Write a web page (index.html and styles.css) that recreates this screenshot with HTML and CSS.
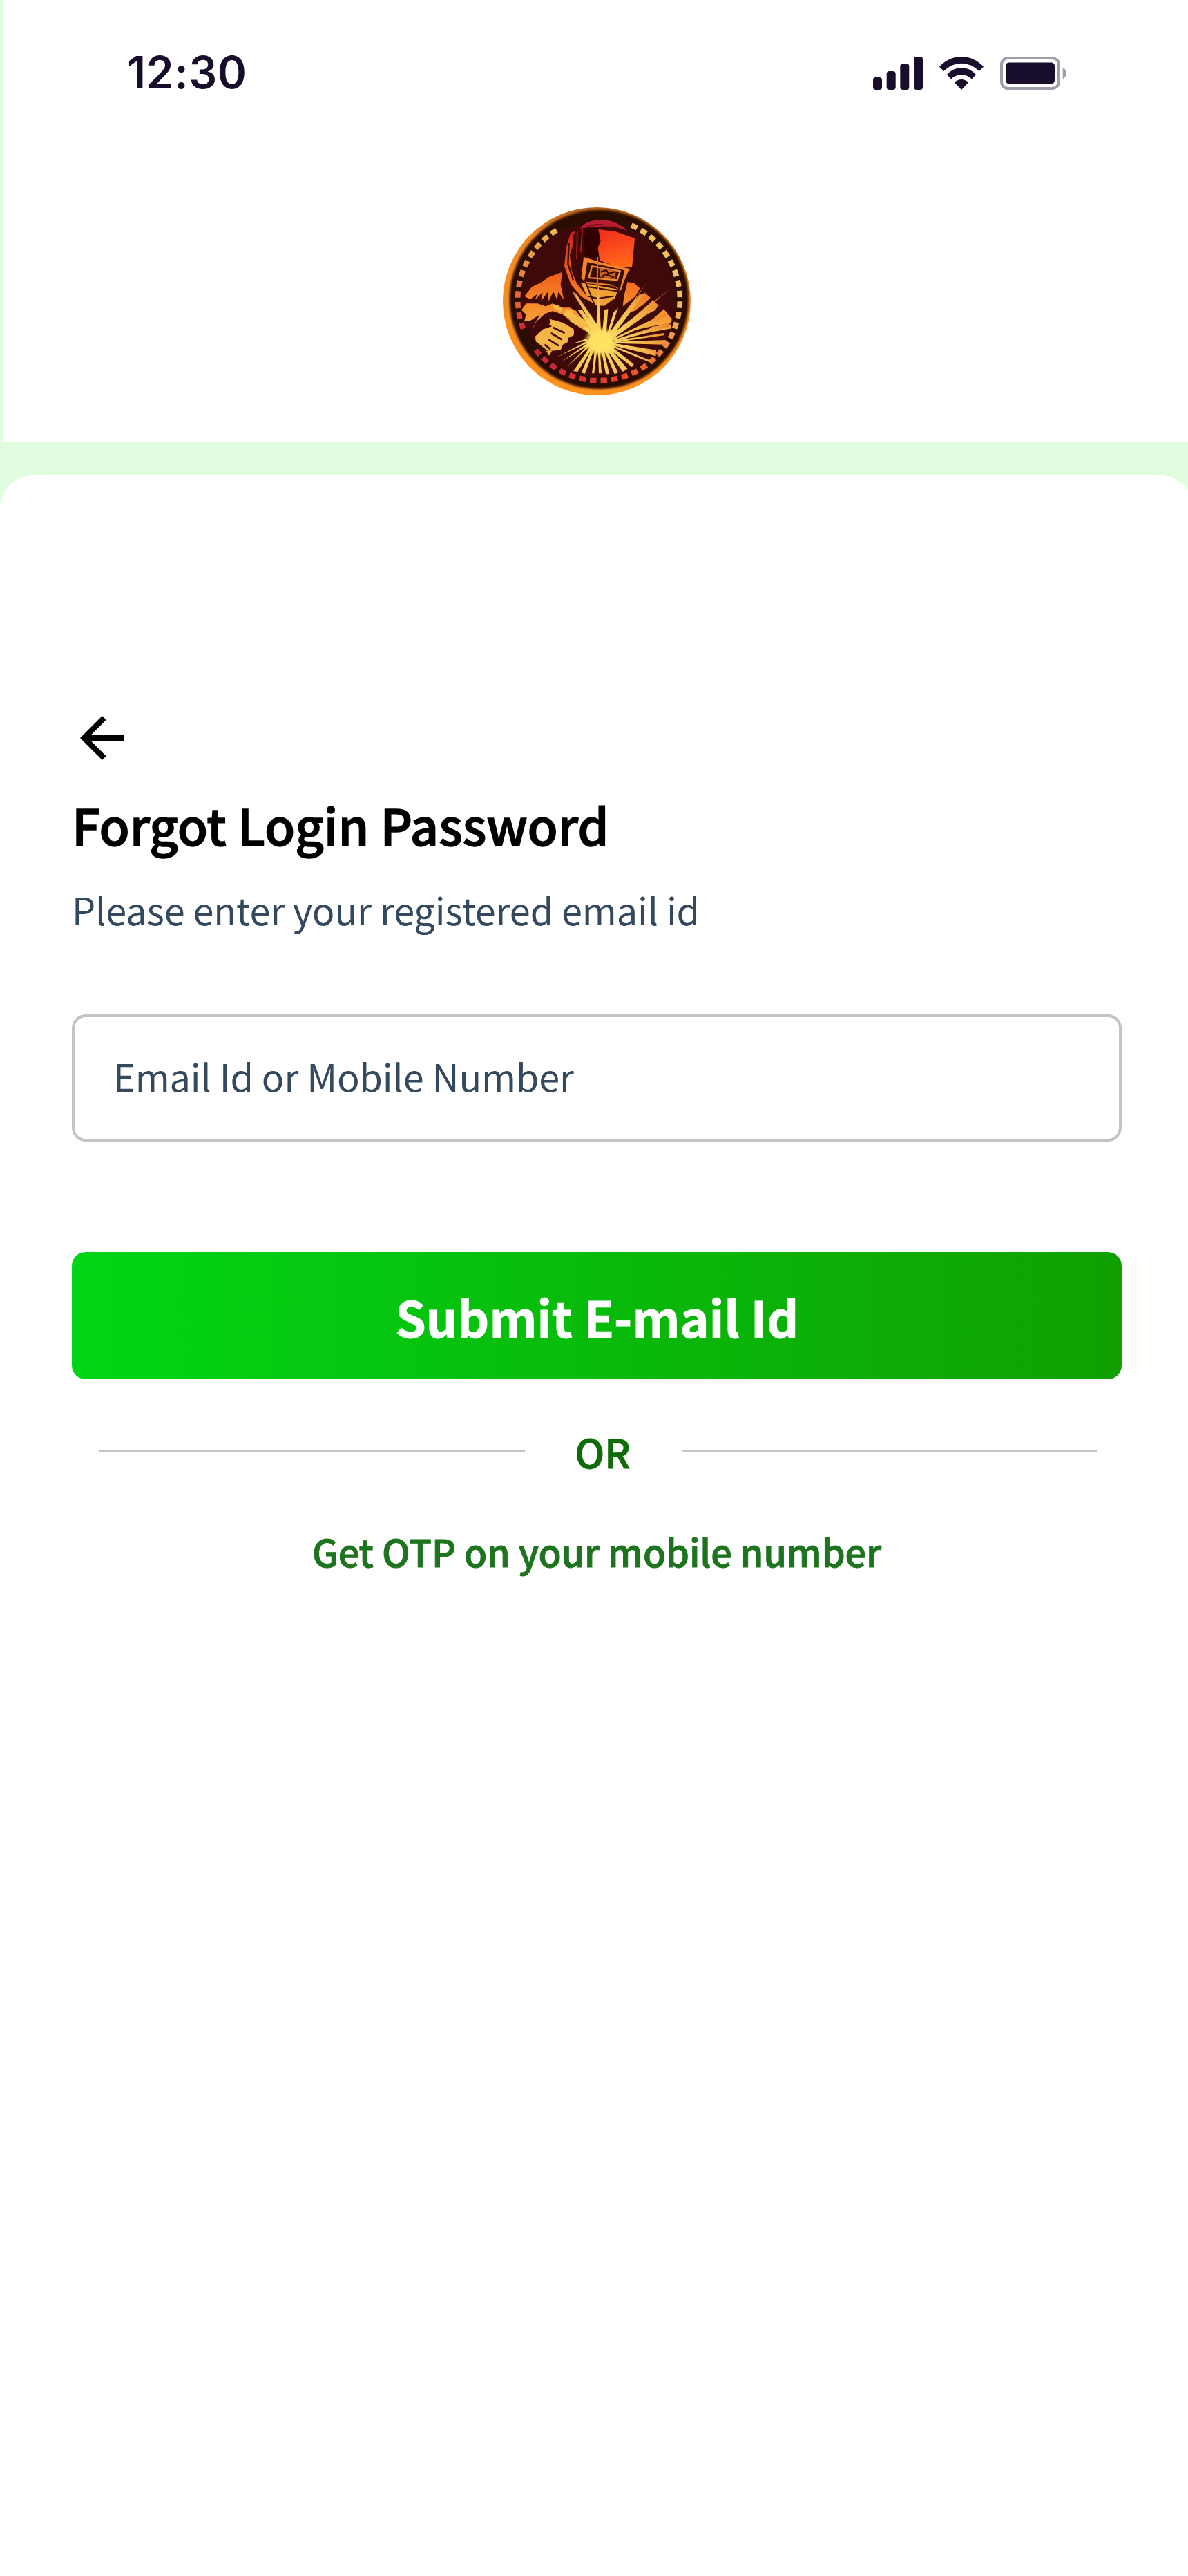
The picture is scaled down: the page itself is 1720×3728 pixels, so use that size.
FILE: index.html
```html
<!DOCTYPE html>
<html lang="en">
<head>
<meta charset="utf-8">
<title>Forgot Login Password</title>
<link rel="stylesheet" href="styles.css">
</head>
<body>
<div class="screen">
  <header class="header">
    <div class="status">
      <span class="time">12:30</span>
      <svg class="status-icons" viewBox="0 0 281 48" aria-hidden="true">
        <g fill="#180e2b">
          <rect x="0" y="30" width="13" height="18" rx="4"/>
          <rect x="19.700" y="21" width="13" height="27" rx="4"/>
          <rect x="39.300" y="10.300" width="13" height="37.700" rx="4"/>
          <rect x="59" y="0" width="13" height="48" rx="4"/>
          <path d="M96 14.500Q110 0 128 0T160 14.500L153.700 21Q142 9.800 128 9.800T102.300 21Z"/>
          <path d="M107 26Q116 16 128 16T149 26L143 32.500Q136 26 128 26T113 32.500Z"/>
          <path d="M118 37.500Q122 33 128 33T138 37.500L128 48Z"/>
          <rect x="192" y="8.500" width="71" height="31" rx="5"/>
        </g>
        <rect x="186" y="2" width="83" height="44" rx="9.500" fill="none" stroke="#a29dab" stroke-width="4"/>
        <path d="M274.700 15.500C281.500 19 281.500 29 274.700 32.500Z" fill="#a29dab"/>
      </svg>
    </div>
    <svg class="logo" viewBox="39 44 816 816" role="img" aria-label="Welder logo">
      <defs>
        <linearGradient id="rim" x1="0" y1="0" x2="0" y2="1"><stop offset="0" stop-color="#b8651c"/><stop offset=".15" stop-color="#f08a22"/><stop offset="1" stop-color="#ff9320"/></linearGradient>
        <linearGradient id="ringA" gradientUnits="userSpaceOnUse" x1="190" y1="760" x2="800" y2="400"><stop offset="0" stop-color="#c01f3f"/><stop offset=".45" stop-color="#ee4626"/><stop offset=".75" stop-color="#f08540"/><stop offset="1" stop-color="#f4bf62"/></linearGradient>
        <linearGradient id="ringB" gradientUnits="userSpaceOnUse" x1="0" y1="140" x2="0" y2="570"><stop offset="0" stop-color="#f0b455"/><stop offset=".5" stop-color="#e8793f"/><stop offset=".8" stop-color="#e05a3c"/><stop offset="1" stop-color="#d0203e"/></linearGradient>
        <linearGradient id="visor" x1="0" y1="0" x2=".25" y2="1"><stop offset="0" stop-color="#ee2c1c"/><stop offset=".6" stop-color="#fc4c1c"/><stop offset="1" stop-color="#ff6618"/></linearGradient>
        <linearGradient id="body" gradientUnits="userSpaceOnUse" x1="0" y1="140" x2="0" y2="640"><stop offset="0" stop-color="#c41f26"/><stop offset=".4" stop-color="#f0621c"/><stop offset=".65" stop-color="#f5892a"/><stop offset="1" stop-color="#f6c04c"/></linearGradient>
        <radialGradient id="spark" gradientUnits="userSpaceOnUse" cx="465" cy="628" r="320"><stop offset="0" stop-color="#ffe35c"/><stop offset=".5" stop-color="#f4c055"/><stop offset="1" stop-color="#ee8029"/></radialGradient>
        <radialGradient id="glow"><stop offset="0" stop-color="#ffe65c"/><stop offset=".65" stop-color="#fde066"/><stop offset="1" stop-color="#f8cc58" stop-opacity="0"/></radialGradient>
        <filter id="soft"><feGaussianBlur stdDeviation="2"/></filter>
        <filter id="edge"><feGaussianBlur stdDeviation="5"/></filter>
        <clipPath id="disc"><circle cx="447" cy="452" r="408"/></clipPath>
      </defs>
      <g clip-path="url(#disc)">
        <circle cx="447" cy="452" r="410" fill="url(#rim)"/>
        <circle cx="457" cy="444" r="389" fill="#2c0905" filter="url(#edge)"/>
        <circle cx="456" cy="444" r="335" fill="#3e0908"/>
        <g filter="url(#soft)">
          <g fill="none" stroke-width="23" stroke-dasharray="28 18.200">
            <path d="M597.500 121.700A352 352 0 1 1 181.300 664.100" stroke="url(#ringA)"/>
            <path d="M128 571.900A352 352 0 0 1 274.200 142.600" stroke="url(#ringB)"/>
          </g>
          <!-- shoulders and sleeves -->
          <g fill="url(#body)">
            <path d="M297 325L240 346 205 370 165 390 133 430 158 444 190 420 178 446 212 414 205 452 235 410 238 452 258 410 275 446 280 410 304 446 290 380Z"/>
            <path d="M120 490L140 462 190 462 225 474 255 462 300 480 330 480 380 505 430 560 430 600 350 552 300 510 255 495 222 506 185 540 165 580 180 545 200 510 160 535 132 540 140 510Z"/>
            <path d="M580 368L610 374 634 396 615 430 560 474 565 430Z"/>
            <path d="M654 414L680 436 655 462 610 495 585 500Z"/>
            <path d="M690 446L715 470 700 492 620 530Z"/>
            <path d="M738 486L773 530 770 548 690 560 600 580 690 530Z"/>
            <path d="M688 562L770 552 772 570 650 592Z"/>
          </g>
          <!-- hood -->
          <path d="M333 156L352 148 345 200 330 250 338 320 360 375 405 430 440 465 380 432 335 380 306 300 314 220Z" fill="url(#body)"/>
          <path d="M350 160L344 270 352 330M381 155L374 250 384 280M326 200L322 290 345 360" fill="none" stroke="#3e0908" stroke-width="7"/>
          <path d="M362 150L360 270M385 140L377 240" fill="none" stroke="#b51f22" stroke-width="5"/>
          <path d="M374 136Q405 96 475 99 540 104 578 146 520 122 450 128 410 128 374 136Z" fill="#b81c2d"/>
          <path d="M402 127Q450 104 550 132L480 118Z" fill="#5c0b18"/>
          <path d="M390 136H454L466 180 452 206 460 274 396 252Z" fill="#320606"/>
          <path d="M454 140L530 150 612 178 600 306 535 302 460 276 452 220 464 190Z" fill="url(#visor)"/>
          <!-- face mask -->
          <path d="M390 260L455 280 592 312 565 366 553 405 515 385 400 374 380 350Z" fill="#f38328"/>
          <path d="M406 282L455 292 568 318 548 398 504 378 393 366Z" fill="#3a0905"/>
          <path d="M427 300L548 321 536 360 412 350Z" fill="none" stroke="#ed8f34" stroke-width="7"/>
          <path d="M458 306L530 320 526 356 460 346Z" fill="#ce6427"/>
          <path d="M465 325L488 317 498 332 525 324M468 346L485 335 522 348M432 305L426 348" fill="none" stroke="#3e0905" stroke-width="7"/>
          <path d="M378 372L448 384 548 402 526 438 480 472 438 470 405 430Z" fill="#efa036"/>
          <path d="M410 390L550 410M410 430L450 440 520 430M395 360L440 475M560 340L525 455 490 490" fill="none" stroke="#3e0905" stroke-width="6"/>
          <path d="M590 320L570 370 550 440 510 520M320 430L430 590M336 405L440 560" fill="none" stroke="#3a0705" stroke-width="10"/>
          <!-- glove and torch -->
          <path d="M258 468L280 470 302 490 290 500 260 482ZM314 484L348 496 336 528 302 514ZM345 508L385 525 445 582 446 604 400 570 330 540Z" fill="#f7bb48"/>
          <path d="M256 532L240 552 300 596 348 590 346 572 300 545Z" fill="#f4b64a"/>
          <path d="M240 526L348 580 347 600 322 612 320 630 300 640 290 664 235 668 182 626 180 604 212 574 255 560Z" fill="#f4b64a"/>
          <path d="M258 566L308 590M248 590L295 618M238 618L282 645M220 640L246 660" fill="none" stroke="#401006" stroke-width="8"/>
          <path d="M228 668L240 688 252 668Z" fill="#f4b64a"/>
          <!-- sparks -->
          <g fill="url(#spark)">
            <path d="M446 600L448 380 455 380 466 600ZM455 600L340 410 358 420 480 600ZM440 600L365 490 385 490 460 600ZM430 610L390 570 400 560 450 600Z"/>
            <path d="M470 600L480 490 496 485 488 600ZM490 600L520 500 540 480 500 600ZM490 605L665 370 500 610ZM495 600L630 425 655 418 510 610ZM500 605L765 398 510 615ZM505 610L690 450 716 474 520 612ZM515 615L742 505 755 515 520 620ZM520 620L758 545 765 562 530 625Z"/>
            <path d="M520 624L740 590 738 600 530 630ZM520 628L748 620 738 640 520 634ZM510 633L705 664 704 690 510 642ZM510 640L688 712 675 716 500 645ZM500 640L608 725 600 738 490 650ZM495 645L580 745 560 758 485 655ZM485 650L540 762 524 768 475 655ZM474 650L502 768 486 768 465 655ZM460 650L468 765 456 765 452 650ZM450 650L436 765 426 765 440 650ZM440 648L396 766 380 762 430 645ZM434 645L364 758 345 755 425 640ZM425 640L320 735 410 642ZM420 638L294 714 410 632ZM415 630L270 696 405 625ZM410 622L345 635 400 615Z"/>
          </g>
          <path d="M450 400V260" stroke="#b5702a" stroke-width="7"/>
          <ellipse cx="464" cy="628" rx="76" ry="68" fill="url(#glow)"/>
        </g>
      </g>
    </svg>
  </header>
  <main class="panel">
    <svg class="back" viewBox="0 0 24 24" role="img" aria-label="Back"><path d="M20 11H7.830l5.590-5.590L12 4l-8 8 8 8 1.410-1.410L7.830 13H20z"/></svg>
    <h1 class="title">Forgot Login Password</h1>
    <p class="subtitle">Please enter your registered email id</p>
    <div class="field"><span class="placeholder">Email Id or Mobile Number</span></div>
    <div class="submit"><span class="submit-label">Submit E-mail Id</span></div>
    <div class="divider"><span class="line"></span><span class="or">OR</span><span class="line line-right"></span></div>
    <div class="otp"><span class="otp-label">Get OTP on your mobile number</span></div>
  </main>
</div>
</body>
</html>
```

FILE: styles.css
```css
* { box-sizing: border-box; }
body { margin: 0; background: #fff; }
.screen {
  width: 1720px;
  height: 3728px;
  overflow: hidden;
  background: #e0fddf;
  font-family: "Noto Sans CJK SC", "Noto Sans", sans-serif;
}
.header {
  width: 1720px;
  height: 640px;
  margin-left: 4px;
  padding-top: 66px;
  background: #fff;
}
.status {
  display: flex;
  justify-content: space-between;
  align-items: flex-start;
  height: 78px;
  padding: 0 179px 0 180px;
}
.time {
  font: 600 64px/78px Inter, sans-serif;
  letter-spacing: 0.7px;
  color: #180e2b;
}
.status-icons { width: 281px; height: 48px; margin-top: 16px; }
.logo { display: block; width: 272px; height: 272px; margin: 156px auto 0; }
.panel {
  width: 1728px;
  height: 3040px;
  margin-top: 48px;
  padding: 332px 104px 0;
  border-radius: 48px 48px 0 0;
  background: #fff;
}
.back { display: block; width: 96px; height: 96px; margin-left: -4px; }
.title {
  margin: 27px 0 0;
  font-size: 72px;
  font-weight: 500;
  line-height: 100px;
  letter-spacing: -0.05px;
  -webkit-text-stroke: 1.4px currentColor;
  white-space: nowrap;
  color: #000;
}
.subtitle {
  margin: 33px 0 0;
  font-size: 54px;
  line-height: 80px;
  letter-spacing: -0.12px;
  white-space: nowrap;
  color: #34495e;
}
.field {
  display: flex;
  align-items: center;
  height: 184px;
  margin-top: 112px;
  padding: 0 56px 7px;
  border: 4px solid #c4c4c4;
  border-radius: 20px;
  font-size: 54px;
  letter-spacing: -0.12px;
  color: #34495e;
}
.submit {
  display: flex;
  align-items: center;
  justify-content: center;
  height: 184px;
  margin-top: 160px;
  border-radius: 20px;
  background: linear-gradient(90deg, #00d615, #10a000);
  font-size: 72px;
  font-weight: 700;
  letter-spacing: -0.3px;
  -webkit-text-stroke: 0.8px currentColor;
  color: #fff;
}
.divider {
  display: flex;
  align-items: center;
  height: 84px;
  margin-top: 62px;
  padding: 0 36px 0 40px;
}
.line { width: 616px; height: 4px; background: #c4c4c4; }
.line-right { width: 600px; }
.or {
  width: 228px;
  padding-right: 3px;
  text-align: center;
  font-size: 57px;
  font-weight: 500;
  line-height: 84px;
  -webkit-text-stroke: 1px currentColor;
  color: #0f6c08;
}
.otp {
  margin-top: 63px;
  text-align: center;
  font-size: 54px;
  font-weight: 500;
  line-height: 80px;
  letter-spacing: -0.1px;
  -webkit-text-stroke: 1px currentColor;
  color: #1e741e;
}
```
